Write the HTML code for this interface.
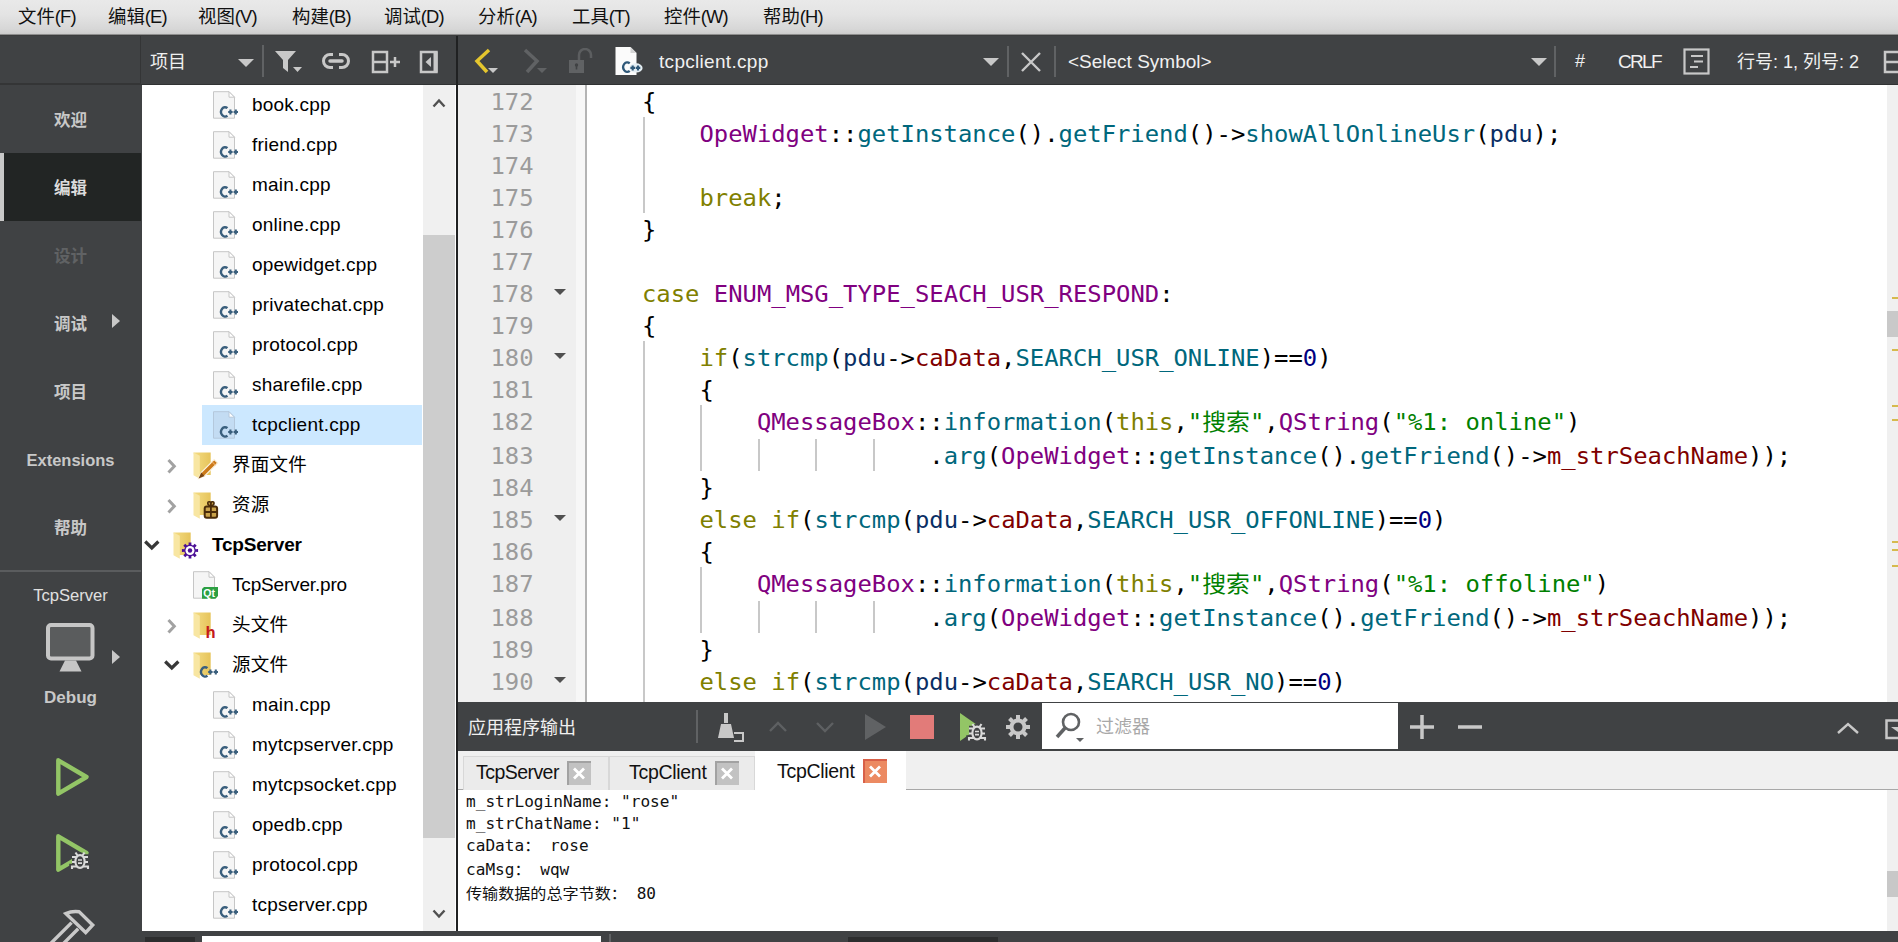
<!DOCTYPE html>
<html lang="zh"><head><meta charset="utf-8"><title>Qt Creator</title>
<style>
*{box-sizing:border-box;margin:0;padding:0}
html,body{width:1898px;height:942px;overflow:hidden;background:#404244}
body{position:relative;font-family:"Liberation Sans","Noto Sans CJK SC",sans-serif;color:#000}
div,span,svg{position:absolute;white-space:pre}
.t{line-height:1;transform-origin:0 50%}
#menubar{left:0;top:0;width:1898px;height:36px;background:linear-gradient(#e9e9e9 0,#e4e4e4 40%,#d7d7d7 80%,#cecece 93%,#8a8a8a 96%,#303132 99%)}
.mi{top:6px;font-size:18.4px;line-height:22px;color:#111}.mi i{font-style:normal;letter-spacing:-0.85px;position:static}
#modebar{left:0;top:36px;width:141px;height:906px;background:#404244}
.mode{left:0;width:141px;text-align:center;font-size:16.5px;font-weight:bold;color:#c8c8c8;line-height:20px}
#toolbar{left:141px;top:36px;width:1757px;height:49px;background:#404244;border-bottom:1px solid #303233}
#tree{left:142px;top:85px;width:281px;height:846px;background:#fff;overflow:hidden}
.row{left:0;width:281px;height:40px}
.lbl{font-size:19px;line-height:24px;top:8px;color:#000;letter-spacing:0.22px}
#tsb{left:423px;top:85px;width:32px;height:846px;background:#f0f0f0}
#divider{left:456px;top:36px;width:2px;height:906px;background:#202122}
#gutter{left:458px;top:85px;width:118px;height:617px;background:#efefef}
#gutter2{left:576px;top:85px;width:9px;height:617px;background:#f7f7f7}
#gline{left:585px;top:85px;width:2px;height:617px;background:#b4b4b4}
#code{left:587px;top:85px;width:1300px;height:617px;background:#fff;overflow:hidden}
#esb{left:1887px;top:85px;width:11px;height:617px;background:#f0f0f0}
.ln{font-family:"DejaVu Sans Mono","Liberation Mono","Noto Sans CJK SC",monospace;font-size:23.870px;color:#9b9b9b;left:490.500px;line-height:32px;height:32px;transform:scaleY(0.93);transform-origin:0 24.300px}
.cl{font-family:"DejaVu Sans Mono","Liberation Mono","Noto Sans CJK SC",monospace;font-size:23.870px;line-height:32px;height:32px;left:584.500px;color:#000;transform:scaleY(0.93);transform-origin:0 24.300px}
.k{color:#808000}.c{color:#800080}.f{color:#00677c}.m{color:#800000}.s{color:#008000}.n{color:#000080}.v{color:#092e64}
.ig{width:2px;background:#c8c8c8}
#ohead{left:458px;top:702px;width:1440px;height:49px;background:#404244}
#otabs{left:458px;top:751px;width:1440px;height:39px;background:#f0f0f0;border-bottom:1px solid #a8a8a8}
#obody{left:458px;top:790px;width:1440px;height:141px;background:#fff}
.ol{font-family:"DejaVu Sans Mono","Liberation Mono","Noto Sans CJK SC",monospace;font-size:16.100px;left:466px;line-height:20px;color:#111;transform:scaleY(0.93);transform-origin:0 15.500px}
#bottom{left:141px;top:931px;width:1757px;height:11px;background:#404244}
</style></head><body>

<div id="menubar">
<span class="mi" style="left:18px">文件<i>(F)</i></span>
<span class="mi" style="left:108px">编辑<i>(E)</i></span>
<span class="mi" style="left:198px">视图<i>(V)</i></span>
<span class="mi" style="left:292px">构建<i>(B)</i></span>
<span class="mi" style="left:384px">调试<i>(D)</i></span>
<span class="mi" style="left:478px">分析<i>(A)</i></span>
<span class="mi" style="left:572px">工具<i>(T)</i></span>
<span class="mi" style="left:664px">控件<i>(W)</i></span>
<span class="mi" style="left:763px">帮助<i>(H)</i></span>
</div>
<div id="modebar">
<div style="left:0;top:47px;width:141px;height:2px;background:#343536"></div><div style="left:140px;top:0;width:2px;height:49px;background:#343536"></div>
<div style="left:0;top:117px;width:141px;height:68px;background:#222524"></div><div style="left:0;top:117px;width:4px;height:68px;background:#c8c8c8"></div>
<div class="mode" style="top:74px;color:#c8c8c8">欢迎</div>
<div class="mode" style="top:142px;color:#dcdcdc">编辑</div>
<div class="mode" style="top:210px;color:#606264">设计</div>
<div class="mode" style="top:278px;color:#c8c8c8">调试</div>
<div class="mode" style="top:346px;color:#c8c8c8">项目</div>
<div class="mode" style="top:414px;color:#c8c8c8">Extensions</div>
<div class="mode" style="top:482px;color:#c8c8c8">帮助</div>
<svg style="left:111px;top:277px" width="10" height="16" viewBox="0 0 10 16"><path d="M1 1 L9 8 L1 15Z" fill="#c8c8c8"/></svg>
<div style="left:0;top:534px;width:141px;height:2px;background:#5a5c5e"></div>
<div class="mode" style="top:550px;font-weight:normal;font-size:16.600px;color:#e0e0e0">TcpServer</div>
<svg style="left:45px;top:585px" width="52" height="52" viewBox="-1 -2 52 52"><rect x="2" y="2" width="44.500" height="33.500" rx="3" fill="#5a5c5d" stroke="#c6c6c6" stroke-width="4"/><path d="M19 37.500 L30 37.500 L35.500 48.500 L13.500 48.500Z" fill="#c6c6c6"/></svg>
<svg style="left:111px;top:613px" width="10" height="16" viewBox="0 0 10 16"><path d="M1 1 L9 8 L1 15Z" fill="#c8c8c8"/></svg>
<div class="mode" style="top:652px;font-size:17px">Debug</div>
<svg style="left:52px;top:720px" width="40" height="42" viewBox="0 0 40 42"><path d="M6.300 4.300 L34.500 21 L6.300 37.700Z" fill="none" stroke="#93c566" stroke-width="4.400" stroke-linejoin="round"/></svg>
<svg style="left:52px;top:796px" width="44" height="42" viewBox="0 0 44 42"><path d="M6.300 4.300 L34.500 21 L6.300 37.700Z" fill="none" stroke="#93c566" stroke-width="4.400" stroke-linejoin="round"/><g fill="none" stroke="#404244" stroke-width="5.500"><ellipse cx="28" cy="29.500" rx="4.600" ry="6.400"/><path d="M20 25h5M20 30h4M20 36.500v-2h5M36 25h-5M36 30h-4M36 36.500v-2h-5"/></g><g fill="#404244" stroke="#dadada" stroke-width="2.100"><path d="M20 25h5M20 30h4M20 37v-2.500h5M36 25h-5M36 30h-4M36 37v-2.500h-5M25.500 23.500l-2-3M30.500 23.500l2-3" fill="none"/><ellipse cx="28" cy="29.500" rx="4.600" ry="6.400"/><path d="M26 28h4M26 31.200h4" stroke-width="1.700"/></g></svg>
<svg style="left:40px;top:866px" width="64" height="40" viewBox="40 902 64 40"><g fill="none" stroke="#c9c9c9" stroke-width="3.400" stroke-linejoin="miter"><path d="M65.800 913.600 Q72 910.800 79.200 911.800 L92.700 925 L85.700 932.600 Z"/><path d="M71.600 922.600 L46 948.200 M78.200 928.800 L58 949"/></g></svg>
</div>
<div id="toolbar">
<span class="t" style="left:9px;top:17px;font-size:18px;color:#f0f0f0">项目</span>
<svg style="left:95px;top:21px" width="20" height="12"><path d="M2 2 L18 2 L10 10Z" fill="#c8c8c8"/></svg>
<div style="left:121px;top:9px;width:2px;height:32px;background:#606264"></div>
<svg style="left:133px;top:13px" width="30" height="26" viewBox="0 0 30 26"><path d="M1 2 H22 L14 11 V23 L9 19 V11Z" fill="#c8c8c8"/><path d="M19 18h9l-4.5 5z" fill="#c8c8c8"/></svg>
<svg style="left:180px;top:14px" width="30" height="22" viewBox="0 0 30 22"><g fill="none" stroke="#c8c8c8" stroke-width="3"><path d="M12 4.500H9a6.500 6.500 0 0 0 0 13h3M18 4.500h3a6.500 6.500 0 0 1 0 13h-3"/><path d="M9 11h12" stroke-linecap="round" stroke-width="3.5"/></g></svg>
<svg style="left:230px;top:14px" width="32" height="24" viewBox="0 0 32 24"><g fill="none" stroke="#c8c8c8" stroke-width="2.5"><rect x="2" y="2" width="14" height="20"/><path d="M2 12h14M19 12h10M24 7v10"/></g></svg>
<svg style="left:278px;top:14px" width="22" height="24" viewBox="0 0 22 24"><rect x="2" y="2" width="15.500" height="20" fill="none" stroke="#c8c8c8" stroke-width="2.500"/><rect x="14.500" y="2" width="4" height="20" fill="#c8c8c8"/><path d="M12 7v10l-5.500-5z" fill="#c8c8c8"/></svg>
<svg style="left:332px;top:10px" width="30" height="30" viewBox="0 0 30 30"><path d="M16 4 L4 15 L14 26" fill="none" stroke="#e5c62e" stroke-width="3.5"/><path d="M15 22h10l-5 5z" fill="#c8c8c8"/></svg>
<svg style="left:380px;top:10px" width="30" height="30" viewBox="0 0 30 30"><path d="M4 4 L16 15 L6 26" fill="none" stroke="#606264" stroke-width="3.5"/><path d="M16 22h10l-5 5z" fill="#606264"/></svg>
<svg style="left:426px;top:12px" width="28" height="28" viewBox="0 0 28 28"><rect x="2" y="12" width="15" height="13" fill="#606264"/><circle cx="9.500" cy="17" r="1.700" fill="#404244"/><rect x="8.700" y="17" width="1.600" height="4.500" fill="#404244"/><path d="M12 12V7a5 5 0 0 1 12 0v3" fill="none" stroke="#5c5e60" stroke-width="2.5"/></svg>
<svg style="left:470px;top:8px" width="36" height="34" viewBox="0 0 36 34"><path d="M4.500 2.900h15l6 6v22h-21z" fill="#fbfbfb"/><path d="M19.500 2.900v6h6z" fill="#d4d4d4"/><ellipse cx="25" cy="23.900" rx="6.600" ry="4.600" fill="#e6eff4"/><path d="M18.700 19.300a4 4.800 0 1 0 0 7.600" fill="none" stroke="#2f5878" stroke-width="2.300"/><path d="M19.400 23.900h4.600M21.700 21.400v5M24.700 23.900h4.600M27 21.400v5" stroke="#2f5878" stroke-width="2.100"/></svg>
<span class="t" style="left:518px;top:16px;font-size:19px;color:#f0f0f0;letter-spacing:0.3px">tcpclient.cpp</span>
<svg style="left:840px;top:20px" width="20" height="12"><path d="M2 2 L18 2 L10 10Z" fill="#c8c8c8"/></svg>
<div style="left:866px;top:10px;width:2px;height:31px;background:#606264"></div>
<svg style="left:879px;top:15px" width="22" height="22" viewBox="0 0 22 22"><path d="M2 2L20 20M20 2L2 20" stroke="#c8c8c8" stroke-width="2.4"/></svg>
<div style="left:913px;top:10px;width:2px;height:31px;background:#606264"></div>
<span class="t" style="left:927px;top:16px;font-size:19px;color:#f0f0f0;letter-spacing:0px">&lt;Select Symbol&gt;</span>
<svg style="left:1388px;top:20px" width="20" height="12"><path d="M2 2 L18 2 L10 10Z" fill="#c8c8c8"/></svg>
<div style="left:1413px;top:10px;width:2px;height:31px;background:#606264"></div>
<span class="t" style="left:1434px;top:16px;font-size:18px;color:#f0f0f0">#</span>
<span class="t" style="left:1477px;top:16px;font-size:19px;color:#f0f0f0;letter-spacing:-1.7px">CRLF</span>
<svg style="left:1542px;top:12px" width="28" height="28" viewBox="0 0 28 28"><g fill="none" stroke="#c8c8c8" stroke-width="2.2"><rect x="1.5" y="1.5" width="24" height="24"/><path d="M8 8h12M11 13.5h9M7 19h8"/></g></svg>
<span class="t" style="left:1596px;top:17px;font-size:18px;color:#f0f0f0;letter-spacing:0px">行号: 1, 列号: 2</span>
<svg style="left:1742px;top:13px" width="15" height="26" viewBox="0 0 15 26"><g fill="none" stroke="#c8c8c8" stroke-width="2.500"><path d="M15 3H2V23H15M2 13H15"/></g></svg>
</div>
<div id="tree">
<div class="row" style="top:0px">
<svg style="left:70px;top:5px" width="30" height="30" viewBox="0 0 30 30"><path d="M1.500 1.700h15.500l5.500 5.500v21h-21z" fill="#f5f5f5" stroke="#c6c6c6"/><path d="M17 1.700v5.500h5.500z" fill="#fff" stroke="#c6c6c6" stroke-linejoin="round"/><path d="M15.400 18.200a3.900 4.700 0 1 0 0 7.400" fill="none" stroke="#3a5f7d" stroke-width="2.400"/><path d="M16.200 22h4.400M18.400 19.500v5M21.600 22h4.400M23.800 19.500v5" stroke="#3a5f7d" stroke-width="2.100"/></svg>
<span class="lbl" style="left:110px">book.cpp</span>
</div>
<div class="row" style="top:40px">
<svg style="left:70px;top:5px" width="30" height="30" viewBox="0 0 30 30"><path d="M1.500 1.700h15.500l5.500 5.500v21h-21z" fill="#f5f5f5" stroke="#c6c6c6"/><path d="M17 1.700v5.500h5.500z" fill="#fff" stroke="#c6c6c6" stroke-linejoin="round"/><path d="M15.400 18.200a3.900 4.700 0 1 0 0 7.400" fill="none" stroke="#3a5f7d" stroke-width="2.400"/><path d="M16.200 22h4.400M18.400 19.500v5M21.600 22h4.400M23.800 19.500v5" stroke="#3a5f7d" stroke-width="2.100"/></svg>
<span class="lbl" style="left:110px">friend.cpp</span>
</div>
<div class="row" style="top:80px">
<svg style="left:70px;top:5px" width="30" height="30" viewBox="0 0 30 30"><path d="M1.500 1.700h15.500l5.500 5.500v21h-21z" fill="#f5f5f5" stroke="#c6c6c6"/><path d="M17 1.700v5.500h5.500z" fill="#fff" stroke="#c6c6c6" stroke-linejoin="round"/><path d="M15.400 18.200a3.900 4.700 0 1 0 0 7.400" fill="none" stroke="#3a5f7d" stroke-width="2.400"/><path d="M16.200 22h4.400M18.400 19.500v5M21.600 22h4.400M23.800 19.500v5" stroke="#3a5f7d" stroke-width="2.100"/></svg>
<span class="lbl" style="left:110px">main.cpp</span>
</div>
<div class="row" style="top:120px">
<svg style="left:70px;top:5px" width="30" height="30" viewBox="0 0 30 30"><path d="M1.500 1.700h15.500l5.500 5.500v21h-21z" fill="#f5f5f5" stroke="#c6c6c6"/><path d="M17 1.700v5.500h5.500z" fill="#fff" stroke="#c6c6c6" stroke-linejoin="round"/><path d="M15.400 18.200a3.900 4.700 0 1 0 0 7.400" fill="none" stroke="#3a5f7d" stroke-width="2.400"/><path d="M16.200 22h4.400M18.400 19.500v5M21.600 22h4.400M23.800 19.500v5" stroke="#3a5f7d" stroke-width="2.100"/></svg>
<span class="lbl" style="left:110px">online.cpp</span>
</div>
<div class="row" style="top:160px">
<svg style="left:70px;top:5px" width="30" height="30" viewBox="0 0 30 30"><path d="M1.500 1.700h15.500l5.500 5.500v21h-21z" fill="#f5f5f5" stroke="#c6c6c6"/><path d="M17 1.700v5.500h5.500z" fill="#fff" stroke="#c6c6c6" stroke-linejoin="round"/><path d="M15.400 18.200a3.900 4.700 0 1 0 0 7.400" fill="none" stroke="#3a5f7d" stroke-width="2.400"/><path d="M16.200 22h4.400M18.400 19.500v5M21.600 22h4.400M23.800 19.500v5" stroke="#3a5f7d" stroke-width="2.100"/></svg>
<span class="lbl" style="left:110px">opewidget.cpp</span>
</div>
<div class="row" style="top:200px">
<svg style="left:70px;top:5px" width="30" height="30" viewBox="0 0 30 30"><path d="M1.500 1.700h15.500l5.500 5.500v21h-21z" fill="#f5f5f5" stroke="#c6c6c6"/><path d="M17 1.700v5.500h5.500z" fill="#fff" stroke="#c6c6c6" stroke-linejoin="round"/><path d="M15.400 18.200a3.900 4.700 0 1 0 0 7.400" fill="none" stroke="#3a5f7d" stroke-width="2.400"/><path d="M16.200 22h4.400M18.400 19.500v5M21.600 22h4.400M23.800 19.500v5" stroke="#3a5f7d" stroke-width="2.100"/></svg>
<span class="lbl" style="left:110px">privatechat.cpp</span>
</div>
<div class="row" style="top:240px">
<svg style="left:70px;top:5px" width="30" height="30" viewBox="0 0 30 30"><path d="M1.500 1.700h15.500l5.500 5.500v21h-21z" fill="#f5f5f5" stroke="#c6c6c6"/><path d="M17 1.700v5.500h5.500z" fill="#fff" stroke="#c6c6c6" stroke-linejoin="round"/><path d="M15.400 18.200a3.900 4.700 0 1 0 0 7.400" fill="none" stroke="#3a5f7d" stroke-width="2.400"/><path d="M16.200 22h4.400M18.400 19.500v5M21.600 22h4.400M23.800 19.500v5" stroke="#3a5f7d" stroke-width="2.100"/></svg>
<span class="lbl" style="left:110px">protocol.cpp</span>
</div>
<div class="row" style="top:280px">
<svg style="left:70px;top:5px" width="30" height="30" viewBox="0 0 30 30"><path d="M1.500 1.700h15.500l5.500 5.500v21h-21z" fill="#f5f5f5" stroke="#c6c6c6"/><path d="M17 1.700v5.500h5.500z" fill="#fff" stroke="#c6c6c6" stroke-linejoin="round"/><path d="M15.400 18.200a3.900 4.700 0 1 0 0 7.400" fill="none" stroke="#3a5f7d" stroke-width="2.400"/><path d="M16.200 22h4.400M18.400 19.500v5M21.600 22h4.400M23.800 19.500v5" stroke="#3a5f7d" stroke-width="2.100"/></svg>
<span class="lbl" style="left:110px">sharefile.cpp</span>
</div>
<div class="row" style="top:320px">
<div style="left:60px;top:0;width:220px;height:40px;background:#cce8ff"></div>
<svg style="left:70px;top:5px" width="30" height="30" viewBox="0 0 30 30"><path d="M1.500 1.700h15.500l5.500 5.500v21h-21z" fill="#c3dcf3" stroke="#b4c8dc"/><path d="M17 1.700v5.500h5.500z" fill="#fff" stroke="#b4c8dc" stroke-linejoin="round"/><path d="M15.400 18.200a3.900 4.700 0 1 0 0 7.400" fill="none" stroke="#3a5f7d" stroke-width="2.400"/><path d="M16.200 22h4.400M18.400 19.500v5M21.600 22h4.400M23.800 19.500v5" stroke="#3a5f7d" stroke-width="2.100"/></svg>
<span class="lbl" style="left:110px">tcpclient.cpp</span>
</div>
<div class="row" style="top:360px">
<svg style="left:23px;top:12px" width="14" height="18" viewBox="0 0 14 18"><path d="M3.500 3l5.800 6.200-5.800 6.200" fill="none" stroke="#a2a2a2" stroke-width="3"/></svg>
<svg style="left:50px;top:6px" width="20" height="30" viewBox="0 0 20 30"><defs><linearGradient id="fg" x1="0" x2="1"><stop offset="0" stop-color="#f4dc84"/><stop offset="1" stop-color="#e6c45a"/></linearGradient></defs><path d="M1.500 1.600h17.200v22.400h-12z" fill="url(#fg)"/><path d="M1.500 1.600l6.300 3.200v23l-6.300-3.600z" fill="#f8e6a2"/></svg>
<svg style="left:54px;top:12px" width="24" height="24" viewBox="54 12 24 24"><path d="M56.600 33.500l2.600-6 13-13 3.400 3.400-13 13z" fill="#cc7a1a" stroke="#fbf3df" stroke-width="1.200"/><path d="M56.600 33.500l2.600-6 3.400 3.400z" fill="#7a4512"/><path d="M70 16.800l3.400 3.400" stroke="#e8a860" stroke-width="1.200"/></svg>
<span class="lbl" style="left:90px;font-size:18.500px">界面文件</span>
</div>
<div class="row" style="top:400px">
<svg style="left:23px;top:12px" width="14" height="18" viewBox="0 0 14 18"><path d="M3.500 3l5.800 6.200-5.800 6.200" fill="none" stroke="#a2a2a2" stroke-width="3"/></svg>
<svg style="left:50px;top:6px" width="20" height="30" viewBox="0 0 20 30"><defs><linearGradient id="fg" x1="0" x2="1"><stop offset="0" stop-color="#f4dc84"/><stop offset="1" stop-color="#e6c45a"/></linearGradient></defs><path d="M1.500 1.600h17.200v22.400h-12z" fill="url(#fg)"/><path d="M1.500 1.600l6.300 3.200v23l-6.300-3.600z" fill="#f8e6a2"/></svg>
<svg style="left:60px;top:14px" width="18" height="22" viewBox="60 14 18 22"><rect x="62.700" y="21.500" width="12.400" height="11.200" rx="2" fill="#c9a24a" stroke="#4a2c0a" stroke-width="2"/><path d="M68.900 21v12M62.500 27h13" fill="none" stroke="#4a2c0a" stroke-width="1.800"/><path d="M68.900 21c-4.500-1-3.500-5 -1-4.200c1 .4 1 2.500 1 4.200c0-1.700 0-3.800 1-4.200c2.500-.8 3.500 3.200-1 4.200z" fill="#c9a24a" stroke="#4a2c0a" stroke-width="1.600"/></svg>
<span class="lbl" style="left:90px;font-size:18.500px">资源</span>
</div>
<div class="row" style="top:440px">
<svg style="left:1px;top:13px" width="18" height="14" viewBox="0 0 18 14"><path d="M2.200 3.500l6.600 6.500 6.600-6.500" fill="none" stroke="#383838" stroke-width="3.200"/></svg>
<svg style="left:30px;top:6px" width="20" height="30" viewBox="0 0 20 30"><defs><linearGradient id="fg" x1="0" x2="1"><stop offset="0" stop-color="#f4dc84"/><stop offset="1" stop-color="#e6c45a"/></linearGradient></defs><path d="M1.500 1.600h17.200v22.400h-12z" fill="url(#fg)"/><path d="M1.500 1.600l6.300 3.200v23l-6.300-3.600z" fill="#f8e6a2"/></svg>
<svg style="left:36px;top:14px" width="24" height="24" viewBox="36 14 24 24"><path d="M56.08 24.09 L56.08 26.91 L53.64 26.85 L52.95 28.53 L54.71 30.22 L52.72 32.21 L51.03 30.45 L49.35 31.14 L49.41 33.58 L46.59 33.58 L46.65 31.14 L44.97 30.45 L43.28 32.21 L41.29 30.22 L43.05 28.53 L42.36 26.85 L39.92 26.91 L39.92 24.09 L42.36 24.15 L43.05 22.47 L41.29 20.78 L43.28 18.79 L44.97 20.55 L46.65 19.86 L46.59 17.42 L49.41 17.42 L49.35 19.86 L51.03 20.55 L52.72 18.79 L54.71 20.78 L52.95 22.47 L53.64 24.15Z" fill="#4b1096"/><circle cx="48.0" cy="25.5" r="4.5" fill="#fff"/><circle cx="48.0" cy="25.5" r="2.2" fill="#4b1096"/></svg>
<span class="lbl" style="left:70px;font-weight:bold;letter-spacing:-0.2px">TcpServer</span>
</div>
<div class="row" style="top:480px">
<svg style="left:50px;top:5px" width="30" height="30" viewBox="0 0 30 30"><path d="M1.500 1.700h15.500l5.500 5.500v21h-21z" fill="#f5f5f5" stroke="#c6c6c6"/><path d="M17 1.700v5.500h5.500z" fill="#fff" stroke="#c6c6c6" stroke-linejoin="round"/><path d="M12 17h14v9l-2.500 2.800h-13.500v-9.800z" fill="#2c9f42"/><text x="11.300" y="27" font-family="Liberation Sans,sans-serif" font-weight="bold" font-size="10.500" fill="#fff" style="position:static">Qt</text></svg>
<span class="lbl" style="left:90px;letter-spacing:-0.17px">TcpServer.pro</span>
</div>
<div class="row" style="top:520px">
<svg style="left:23px;top:12px" width="14" height="18" viewBox="0 0 14 18"><path d="M3.500 3l5.800 6.200-5.800 6.200" fill="none" stroke="#a2a2a2" stroke-width="3"/></svg>
<svg style="left:50px;top:6px" width="20" height="30" viewBox="0 0 20 30"><defs><linearGradient id="fg" x1="0" x2="1"><stop offset="0" stop-color="#f4dc84"/><stop offset="1" stop-color="#e6c45a"/></linearGradient></defs><path d="M1.500 1.600h17.200v22.400h-12z" fill="url(#fg)"/><path d="M1.500 1.600l6.300 3.200v23l-6.300-3.600z" fill="#f8e6a2"/></svg>
<span style="left:63.500px;top:16px;font-size:16.500px;font-weight:bold;color:#c41a1a;line-height:22px">h</span>
<span class="lbl" style="left:90px;font-size:18.500px">头文件</span>
</div>
<div class="row" style="top:560px">
<svg style="left:21px;top:13px" width="18" height="14" viewBox="0 0 18 14"><path d="M2.200 3.500l6.600 6.500 6.600-6.500" fill="none" stroke="#383838" stroke-width="3.200"/></svg>
<svg style="left:50px;top:6px" width="20" height="30" viewBox="0 0 20 30"><defs><linearGradient id="fg" x1="0" x2="1"><stop offset="0" stop-color="#f4dc84"/><stop offset="1" stop-color="#e6c45a"/></linearGradient></defs><path d="M1.500 1.600h17.200v22.400h-12z" fill="url(#fg)"/><path d="M1.500 1.600l6.300 3.200v23l-6.300-3.600z" fill="#f8e6a2"/></svg>
<svg style="left:50px;top:5px" width="30" height="30" viewBox="0 0 30 30"><path d="M15.400 18.200a3.900 4.700 0 1 0 0 7.400" fill="none" stroke="#3a5f7d" stroke-width="2.400"/><path d="M16.200 22h4.400M18.400 19.500v5M21.600 22h4.400M23.800 19.500v5" stroke="#3a5f7d" stroke-width="2.100"/></svg>
<span class="lbl" style="left:90px;font-size:18.500px">源文件</span>
</div>
<div class="row" style="top:600px">
<svg style="left:70px;top:5px" width="30" height="30" viewBox="0 0 30 30"><path d="M1.500 1.700h15.500l5.500 5.500v21h-21z" fill="#f5f5f5" stroke="#c6c6c6"/><path d="M17 1.700v5.500h5.500z" fill="#fff" stroke="#c6c6c6" stroke-linejoin="round"/><path d="M15.400 18.200a3.900 4.700 0 1 0 0 7.400" fill="none" stroke="#3a5f7d" stroke-width="2.400"/><path d="M16.200 22h4.400M18.400 19.500v5M21.600 22h4.400M23.800 19.500v5" stroke="#3a5f7d" stroke-width="2.100"/></svg>
<span class="lbl" style="left:110px">main.cpp</span>
</div>
<div class="row" style="top:640px">
<svg style="left:70px;top:5px" width="30" height="30" viewBox="0 0 30 30"><path d="M1.500 1.700h15.500l5.500 5.500v21h-21z" fill="#f5f5f5" stroke="#c6c6c6"/><path d="M17 1.700v5.500h5.500z" fill="#fff" stroke="#c6c6c6" stroke-linejoin="round"/><path d="M15.400 18.200a3.900 4.700 0 1 0 0 7.400" fill="none" stroke="#3a5f7d" stroke-width="2.400"/><path d="M16.200 22h4.400M18.400 19.500v5M21.600 22h4.400M23.800 19.500v5" stroke="#3a5f7d" stroke-width="2.100"/></svg>
<span class="lbl" style="left:110px">mytcpserver.cpp</span>
</div>
<div class="row" style="top:680px">
<svg style="left:70px;top:5px" width="30" height="30" viewBox="0 0 30 30"><path d="M1.500 1.700h15.500l5.500 5.500v21h-21z" fill="#f5f5f5" stroke="#c6c6c6"/><path d="M17 1.700v5.500h5.500z" fill="#fff" stroke="#c6c6c6" stroke-linejoin="round"/><path d="M15.400 18.200a3.900 4.700 0 1 0 0 7.400" fill="none" stroke="#3a5f7d" stroke-width="2.400"/><path d="M16.200 22h4.400M18.400 19.500v5M21.600 22h4.400M23.800 19.500v5" stroke="#3a5f7d" stroke-width="2.100"/></svg>
<span class="lbl" style="left:110px">mytcpsocket.cpp</span>
</div>
<div class="row" style="top:720px">
<svg style="left:70px;top:5px" width="30" height="30" viewBox="0 0 30 30"><path d="M1.500 1.700h15.500l5.500 5.500v21h-21z" fill="#f5f5f5" stroke="#c6c6c6"/><path d="M17 1.700v5.500h5.500z" fill="#fff" stroke="#c6c6c6" stroke-linejoin="round"/><path d="M15.400 18.200a3.900 4.700 0 1 0 0 7.400" fill="none" stroke="#3a5f7d" stroke-width="2.400"/><path d="M16.200 22h4.400M18.400 19.500v5M21.600 22h4.400M23.800 19.500v5" stroke="#3a5f7d" stroke-width="2.100"/></svg>
<span class="lbl" style="left:110px">opedb.cpp</span>
</div>
<div class="row" style="top:760px">
<svg style="left:70px;top:5px" width="30" height="30" viewBox="0 0 30 30"><path d="M1.500 1.700h15.500l5.500 5.500v21h-21z" fill="#f5f5f5" stroke="#c6c6c6"/><path d="M17 1.700v5.500h5.500z" fill="#fff" stroke="#c6c6c6" stroke-linejoin="round"/><path d="M15.400 18.200a3.900 4.700 0 1 0 0 7.400" fill="none" stroke="#3a5f7d" stroke-width="2.400"/><path d="M16.200 22h4.400M18.400 19.500v5M21.600 22h4.400M23.800 19.500v5" stroke="#3a5f7d" stroke-width="2.100"/></svg>
<span class="lbl" style="left:110px">protocol.cpp</span>
</div>
<div class="row" style="top:800px">
<svg style="left:70px;top:5px" width="30" height="30" viewBox="0 0 30 30"><path d="M1.500 1.700h15.500l5.500 5.500v21h-21z" fill="#f5f5f5" stroke="#c6c6c6"/><path d="M17 1.700v5.500h5.500z" fill="#fff" stroke="#c6c6c6" stroke-linejoin="round"/><path d="M15.400 18.200a3.900 4.700 0 1 0 0 7.400" fill="none" stroke="#3a5f7d" stroke-width="2.400"/><path d="M16.200 22h4.400M18.400 19.500v5M21.600 22h4.400M23.800 19.500v5" stroke="#3a5f7d" stroke-width="2.100"/></svg>
<span class="lbl" style="left:110px">tcpserver.cpp</span>
</div>
</div>
<div id="tsb"><div style="left:0;top:150px;width:32px;height:603px;background:#cdcdcd"></div>
<svg style="left:9px;top:13px" width="14" height="10" viewBox="0 0 14 10"><path d="M1.500 8.500l5.500-6 5.500 6" fill="none" stroke="#505050" stroke-width="2.400"/></svg>
<svg style="left:9px;top:824px" width="14" height="10" viewBox="0 0 14 10"><path d="M1.500 1.500l5.500 6 5.500-6" fill="none" stroke="#505050" stroke-width="2.400"/></svg>
</div>
<div style="left:455px;top:85px;width:1px;height:846px;background:#fff"></div><div id="divider"></div>
<div id="gutter"></div><div id="gutter2"></div><div id="gline"></div><div id="code"></div><div id="esb">
<div style="left:0;top:226px;width:11px;height:26px;background:#c9c9c9"></div>
<div style="left:5px;top:212px;width:6px;height:2px;background:#d6ba4e"></div>
<div style="left:5px;top:264px;width:6px;height:2px;background:#d6ba4e"></div>
<div style="left:5px;top:320px;width:6px;height:2px;background:#d6ba4e"></div>
<div style="left:5px;top:334px;width:6px;height:2px;background:#d6ba4e"></div>
<div style="left:5px;top:456px;width:6px;height:2px;background:#d6ba4e"></div>
<div style="left:5px;top:464px;width:6px;height:2px;background:#d6ba4e"></div>
<div style="left:5px;top:480px;width:6px;height:2px;background:#d6ba4e"></div>
</div>
<span class="ln" style="top:85.6px">172</span>
<span class="cl" style="top:85.6px">    {</span>
<span class="ln" style="top:117.6px">173</span>
<span class="cl" style="top:117.6px">        <span class="c" style="position:static">OpeWidget</span>::<span class="f" style="position:static">getInstance</span>().<span class="f" style="position:static">getFriend</span>()-><span class="f" style="position:static">showAllOnlineUsr</span>(<span class="v" style="position:static">pdu</span>);</span>
<span class="ln" style="top:149.6px">174</span>
<span class="ln" style="top:181.6px">175</span>
<span class="cl" style="top:181.6px">        <span class="k" style="position:static">break</span>;</span>
<span class="ln" style="top:213.6px">176</span>
<span class="cl" style="top:213.6px">    }</span>
<span class="ln" style="top:245.6px">177</span>
<span class="ln" style="top:277.6px">178</span>
<span class="cl" style="top:277.6px">    <span class="k" style="position:static">case</span> <span class="c" style="position:static">ENUM_MSG_TYPE_SEACH_USR_RESPOND</span>:</span>
<span class="ln" style="top:309.6px">179</span>
<span class="cl" style="top:309.6px">    {</span>
<span class="ln" style="top:341.6px">180</span>
<span class="cl" style="top:341.6px">        <span class="k" style="position:static">if</span>(<span class="f" style="position:static">strcmp</span>(<span class="v" style="position:static">pdu</span>-><span class="m" style="position:static">caData</span>,<span class="f" style="position:static">SEARCH_USR_ONLINE</span>)==<span class="n" style="position:static">0</span>)</span>
<span class="ln" style="top:373.6px">181</span>
<span class="cl" style="top:373.6px">        {</span>
<span class="ln" style="top:405.6px">182</span>
<span class="cl" style="top:405.6px">            <span class="c" style="position:static">QMessageBox</span>::<span class="f" style="position:static">information</span>(<span class="k" style="position:static">this</span>,<span class="s" style="position:static">&quot;搜索&quot;</span>,<span class="c" style="position:static">QString</span>(<span class="s" style="position:static">&quot;%1: online&quot;</span>)</span>
<span class="ln" style="top:439.6px">183</span>
<span class="cl" style="top:439.6px">                        .<span class="f" style="position:static">arg</span>(<span class="c" style="position:static">OpeWidget</span>::<span class="f" style="position:static">getInstance</span>().<span class="f" style="position:static">getFriend</span>()-><span class="m" style="position:static">m_strSeachName</span>));</span>
<span class="ln" style="top:471.6px">184</span>
<span class="cl" style="top:471.6px">        }</span>
<span class="ln" style="top:503.6px">185</span>
<span class="cl" style="top:503.6px">        <span class="k" style="position:static">else</span> <span class="k" style="position:static">if</span>(<span class="f" style="position:static">strcmp</span>(<span class="v" style="position:static">pdu</span>-><span class="m" style="position:static">caData</span>,<span class="f" style="position:static">SEARCH_USR_OFFONLINE</span>)==<span class="n" style="position:static">0</span>)</span>
<span class="ln" style="top:535.6px">186</span>
<span class="cl" style="top:535.6px">        {</span>
<span class="ln" style="top:567.6px">187</span>
<span class="cl" style="top:567.6px">            <span class="c" style="position:static">QMessageBox</span>::<span class="f" style="position:static">information</span>(<span class="k" style="position:static">this</span>,<span class="s" style="position:static">&quot;搜索&quot;</span>,<span class="c" style="position:static">QString</span>(<span class="s" style="position:static">&quot;%1: offoline&quot;</span>)</span>
<span class="ln" style="top:601.6px">188</span>
<span class="cl" style="top:601.6px">                        .<span class="f" style="position:static">arg</span>(<span class="c" style="position:static">OpeWidget</span>::<span class="f" style="position:static">getInstance</span>().<span class="f" style="position:static">getFriend</span>()-><span class="m" style="position:static">m_strSeachName</span>));</span>
<span class="ln" style="top:633.6px">189</span>
<span class="cl" style="top:633.6px">        }</span>
<span class="ln" style="top:665.6px">190</span>
<span class="cl" style="top:665.6px">        <span class="k" style="position:static">else</span> <span class="k" style="position:static">if</span>(<span class="f" style="position:static">strcmp</span>(<span class="v" style="position:static">pdu</span>-><span class="m" style="position:static">caData</span>,<span class="f" style="position:static">SEARCH_USR_NO</span>)==<span class="n" style="position:static">0</span>)</span>
<svg style="left:553px;top:288px" width="14" height="8"><path d="M1 1h12l-6 6z" fill="#505050"/></svg>
<svg style="left:553px;top:352px" width="14" height="8"><path d="M1 1h12l-6 6z" fill="#505050"/></svg>
<svg style="left:553px;top:514px" width="14" height="8"><path d="M1 1h12l-6 6z" fill="#505050"/></svg>
<svg style="left:553px;top:676px" width="14" height="8"><path d="M1 1h12l-6 6z" fill="#505050"/></svg>
<div class="ig" style="left:642.8px;top:117px;height:96px"></div>
<div class="ig" style="left:642.8px;top:341px;height:361px"></div>
<div class="ig" style="left:700.3px;top:405px;height:66px"></div>
<div class="ig" style="left:700.3px;top:567px;height:66px"></div>
<div class="ig" style="left:757.7px;top:439px;height:32px"></div>
<div class="ig" style="left:757.7px;top:601px;height:32px"></div>
<div class="ig" style="left:815.2px;top:439px;height:32px"></div>
<div class="ig" style="left:815.2px;top:601px;height:32px"></div>
<div class="ig" style="left:872.7px;top:439px;height:32px"></div>
<div class="ig" style="left:872.7px;top:601px;height:32px"></div>
<div id="ohead">
<span class="t" style="left:10px;top:17px;font-size:18px;color:#f0f0f0">应用程序输出</span>
<div style="left:238px;top:8px;width:2px;height:33px;background:#606264"></div>
<svg style="left:256px;top:8px" width="34" height="34" viewBox="0 0 34 34"><g fill="#c8c8c8"><path d="M10 3h4v10h-4z"/><path d="M7 14h10l3 14H4z"/></g><path d="M20 23h9v8h-9" fill="none" stroke="#c8c8c8" stroke-width="2"/></svg>
<svg style="left:310px;top:19px" width="20" height="12"><path d="M2 10l8-8 8 8" fill="none" stroke="#5e6062" stroke-width="2.4"/></svg>
<svg style="left:357px;top:19px" width="20" height="12"><path d="M2 2l8 8 8-8" fill="none" stroke="#5e6062" stroke-width="2.4"/></svg>
<svg style="left:405px;top:11px" width="24" height="28"><path d="M2 1l21 13-21 13z" fill="#606264"/></svg>
<div style="left:452px;top:13px;width:24px;height:24px;background:#e27b79"></div>
<svg style="left:500px;top:10px" width="30" height="32" viewBox="0 0 30 32"><path d="M2 1l20 14-20 14z" fill="#93c566"/><g transform="translate(-9,-8.500)"><g fill="none" stroke="#404244" stroke-width="5.500"><ellipse cx="28" cy="29.500" rx="4.600" ry="6.400"/><path d="M20 25h5M20 30h4M20 36.500v-2h5M36 25h-5M36 30h-4M36 36.500v-2h-5"/></g><g fill="#404244" stroke="#dadada" stroke-width="2.100"><path d="M20 25h5M20 30h4M20 37v-2.500h5M36 25h-5M36 30h-4M36 37v-2.500h-5M25.500 23.500l-2-3M30.500 23.500l2-3" fill="none"/><ellipse cx="28" cy="29.500" rx="4.600" ry="6.400"/><path d="M26 28h4M26 31.200h4" stroke-width="1.700"/></g></g></svg>
<svg style="left:547px;top:12px" width="26" height="26" viewBox="0 0 26 26"><circle cx="13" cy="13" r="6.500" fill="none" stroke="#c8c8c8" stroke-width="4"/><g stroke="#c8c8c8" stroke-width="4"><path d="M13 1v4M13 21v4M1 13h4M21 13h4M4.500 4.500l3 3M18.500 18.500l3 3M4.500 21.500l3-3M18.500 7.500l3-3"/></g></svg>
<div style="left:584px;top:1px;width:356px;height:46px;background:#fff"></div>
<svg style="left:596px;top:9px" width="34" height="34" viewBox="0 0 34 34"><circle cx="17" cy="11" r="8" fill="none" stroke="#606264" stroke-width="2.600"/><path d="M11 17l-8 9" stroke="#606264" stroke-width="3.500"/><path d="M22 27h8l-4 4z" fill="#606264"/></svg>
<span class="t" style="left:638px;top:16px;font-size:18px;color:#a8a8a8">过滤器</span>
<svg style="left:950px;top:11px" width="28" height="28"><path d="M14 2v24M2 14h24" stroke="#c8c8c8" stroke-width="3.500"/></svg>
<svg style="left:998px;top:11px" width="28" height="28"><path d="M2 14h24" stroke="#c8c8c8" stroke-width="3.500"/></svg>
<svg style="left:1378px;top:19px" width="24" height="14"><path d="M2 12l10-9 10 9" fill="none" stroke="#c8c8c8" stroke-width="2.400"/></svg>
<svg style="left:1427px;top:17px" width="13" height="22"><path d="M13 1.500H1.500V19H13" fill="none" stroke="#c8c8c8" stroke-width="2.500"/><path d="M6 8h7v5z" fill="#c8c8c8"/></svg>
</div>
<div id="otabs">
<div style="left:5px;top:5px;width:146px;height:34px;background:#ebebeb;border:1px solid #d8d8d8;border-bottom:none"></div>
<div style="left:151px;top:5px;width:146px;height:34px;background:#ebebeb;border:1px solid #d8d8d8;border-bottom:none"></div>
<div style="left:297px;top:0px;width:151px;height:40px;background:#fff"></div>
<span class="t" style="left:18px;top:12px;font-size:19.500px;color:#111;letter-spacing:-0.55px">TcpServer</span>
<svg style="left:109px;top:10px" width="24" height="24" viewBox="0 0 24 24"><rect x="0" y="0" width="24" height="24" fill="#c2c2c2"/><path d="M1 24V1H24" fill="none" stroke="#a2a2a2" stroke-width="2"/><path d="M7 7.500l10 10M17 7.500L7 17.500" stroke="#fff" stroke-width="2.800"/></svg>
<span class="t" style="left:171px;top:12px;font-size:19.500px;color:#111;letter-spacing:-0.3px">TcpClient</span>
<svg style="left:257px;top:10px" width="24" height="24" viewBox="0 0 24 24"><rect x="0" y="0" width="24" height="24" fill="#c2c2c2"/><path d="M1 24V1H24" fill="none" stroke="#a2a2a2" stroke-width="2"/><path d="M7 7.500l10 10M17 7.500L7 17.500" stroke="#fff" stroke-width="2.800"/></svg>
<span class="t" style="left:319px;top:11px;font-size:19.500px;color:#111;letter-spacing:-0.3px">TcpClient</span>
<svg style="left:405px;top:8px" width="24" height="24" viewBox="0 0 24 24"><rect x="0" y="0" width="24" height="24" fill="#ec8a62"/><path d="M1 24V1H24" fill="none" stroke="#d86048" stroke-width="2"/><path d="M7 7.500l10 10M17 7.500L7 17.500" stroke="#fff" stroke-width="2.800"/></svg>
</div>
<div id="obody"><div style="left:1429px;top:0;width:11px;height:141px;background:#f0f0f0"></div><div style="left:1429px;top:81px;width:11px;height:26px;background:#c8c8c8"></div></div>
<span class="ol" style="top:792.4px">m_strLoginName: &quot;rose&quot;</span>
<span class="ol" style="top:814.4px">m_strChatName: &quot;1&quot;</span>
<span class="ol" style="top:836.4px">caData： rose</span>
<span class="ol" style="top:860.4px">caMsg： wqw</span>
<span class="ol" style="top:884.4px">传输数据的总字节数： 80</span>
<div id="bottom"><div style="left:4px;top:6px;width:50px;height:6px;background:#2c2d2e"></div><div style="left:61px;top:5px;width:399px;height:7px;background:#fff"></div><div style="left:468px;top:3px;width:2px;height:9px;background:#606264"></div><div style="left:707px;top:6px;width:150px;height:6px;background:#2c2d2e"></div></div>
</body></html>
